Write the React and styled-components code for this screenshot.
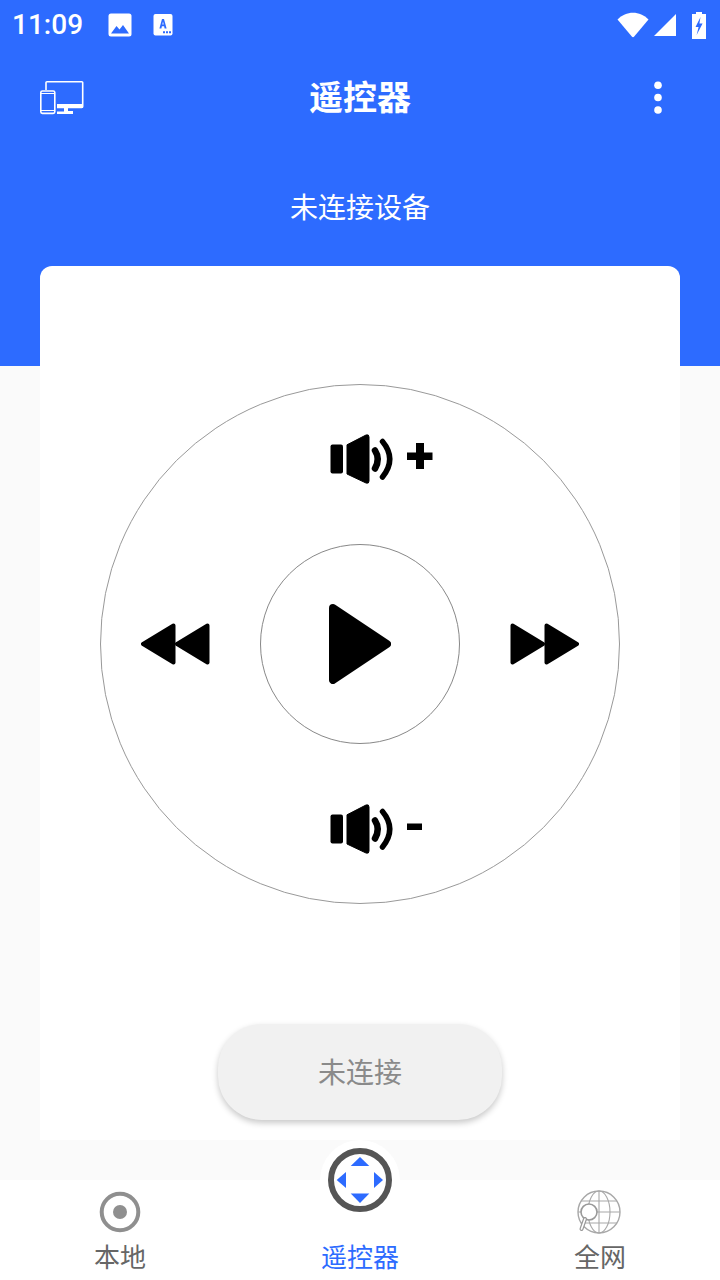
import React from "react";
import styled, { createGlobalStyle } from "styled-components";

const BLUE = "#2d6bff";

const GlobalStyle = createGlobalStyle`
  html, body {
    margin: 0;
    padding: 0;
    background: #fafafa;
  }
  * {
    box-sizing: border-box;
  }
`;

const Screen = styled.div`
  width: 720px;
  height: 1280px;
  overflow: hidden;
  display: flex;
  flex-direction: column;
  background: #fafafa;
  font-family: "Noto Sans CJK SC", "Noto Sans", sans-serif;
`;

const Hero = styled.header`
  height: 366px;
  flex: none;
  background: ${BLUE};
  color: #fff;
`;

const StatusBar = styled.div`
  height: 50px;
  display: flex;
  align-items: center;
  justify-content: space-between;
  padding: 0 14px 0 12px;
`;

const StatusGroup = styled.div`
  display: flex;
  align-items: center;
`;

const Clock = styled.span`
  font-family: Roboto, sans-serif;
  font-size: 28px;
  font-weight: 500;
  line-height: 50px;
  width: 96px;
`;

const StatusIcon = styled.svg`
  display: block;
  flex: none;
  margin-left: ${(p) => p.$gap || 0}px;
`;

const Toolbar = styled.div`
  height: 96px;
  display: flex;
  align-items: center;
  padding: 0 40px;
`;

const ToolbarIcon = styled.svg`
  display: block;
  width: 44px;
  height: 36px;
  flex: none;
`;

const Title = styled.h1`
  flex: 1;
  margin: 0;
  padding-bottom: 5px;
  text-align: center;
  font-size: 34px;
  line-height: 46px;
  font-weight: 700;
`;

const Subtitle = styled.p`
  margin: 40px 0 0;
  text-align: center;
  font-size: 28px;
  line-height: 40px;
`;

const Card = styled.main`
  width: 640px;
  height: 874px;
  flex: none;
  margin: -100px auto 0;
  padding-top: 118px;
  background: #fff;
  border-radius: 12px 12px 0 0;
  display: flex;
  flex-direction: column;
  align-items: center;
`;

const Wheel = styled.div`
  width: 520px;
  height: 520px;
  flex: none;
  border: 1px solid #999;
  border-radius: 50%;
  display: grid;
  grid-template-columns: 159px 200px 159px;
  grid-template-rows: 159px 200px 159px;
`;

const WheelCell = styled.button`
  grid-column: ${(p) => p.$col};
  grid-row: ${(p) => p.$row};
  display: flex;
  align-items: ${(p) => p.$align || "center"};
  justify-content: ${(p) => p.$justify || "flex-start"};
  padding: ${(p) => p.$pad || 0};
  margin: 0;
  border: 0;
  background: none;
`;

const CenterCell = styled(WheelCell)`
  width: 200px;
  height: 200px;
  border: 1px solid #888;
  border-radius: 50%;
`;

const ConnectButton = styled.button`
  width: 284px;
  height: 96px;
  flex: none;
  margin-top: 120px;
  padding: 0 0 2px;
  border: 0;
  border-radius: 44px;
  background: #f1f1f1;
  box-shadow: 0 3px 6px rgba(0, 0, 0, 0.22);
  color: #8a8a8a;
  font-family: inherit;
  font-size: 28px;
  line-height: 40px;
`;

const TabBar = styled.nav`
  height: 100px;
  flex: none;
  margin-top: 40px;
  background: #fff;
  display: grid;
  grid-template-columns: repeat(3, 240px);
`;

const Tab = styled.div`
  display: flex;
  flex-direction: column;
  align-items: center;
  color: ${(p) => (p.$active ? BLUE : "#666")};
`;

const TabIcon = styled.svg`
  display: block;
  width: 48px;
  height: 48px;
  margin-top: 8px;
  flex: none;
`;

const TabBubble = styled.div`
  width: 80px;
  height: 80px;
  margin-top: -40px;
  flex: none;
  border-radius: 50%;
  background: #fff;
  display: flex;
  align-items: center;
  justify-content: center;
`;

const TabLabel = styled.span`
  font-size: 26px;
  line-height: 36px;
  margin-top: ${(p) => p.$gap || 0}px;
`;

// the remote's icons are scaled bitmaps in the app, so they are a bit soft
const Svg = styled.svg`
  display: block;
  flex: none;
  filter: blur(0.5px);
`;

const PictureIcon = () => (
  <StatusIcon width="24" height="24" viewBox="0 0 24 24">
    <rect x="0.5" y="0.5" width="23" height="23" rx="2.5" fill="#fff" />
    <path d="M3 20.5 L8.5 13 L11.5 16.5 L15 12 L21 20.5 Z" fill={BLUE} />
  </StatusIcon>
);

const FontIcon = () => (
  <StatusIcon $gap={21} width="20" height="24" viewBox="0 0 20 24">
    <rect x="0.5" y="1" width="19" height="21.5" rx="2" fill="#fff" />
    <path
      d="M6.4 15.5 L9 6 H11 L13.6 15.5 H11.6 L11.1 13.3 H8.9 L8.4 15.5 Z M9.3 11.4 H10.7 L10 8.6 Z"
      fill={BLUE}
      fillRule="evenodd"
    />
    <path d="M10 18.2h2v2h-2zM13 18.2h2v2h-2zM16 18.2h2v2h-2z" fill={BLUE} />
  </StatusIcon>
);

const WifiIcon = () => (
  <StatusIcon width="32" height="26" viewBox="0 0 32 26">
    <path
      d="M0.5 7.5 C9 -1.5 23 -1.5 31.5 7.5 L17.2 24.6 C16.5 25.4 15.5 25.4 14.8 24.6 Z"
      fill="#fff"
    />
  </StatusIcon>
);

const SignalIcon = () => (
  <StatusIcon $gap={5} width="22" height="22" viewBox="0 0 22 22">
    <path d="M22 0 V22 H0 Z" fill="#fff" />
  </StatusIcon>
);

const BatteryIcon = () => (
  <StatusIcon $gap={16} width="14" height="27" viewBox="0 0 14 27">
    <path d="M4 0 H10 V2 H14 V27 H0 V2 H4 Z" fill="#fff" />
    <path d="M8.5 5 L3.5 15 H6.6 L4.6 23 L10.6 11.5 H7.4 Z" fill={BLUE} />
  </StatusIcon>
);

const DevicesIcon = () => (
  <ToolbarIcon viewBox="0 0 44 36">
    <g fill="none" stroke="#fff" strokeWidth="1.6">
      <path d="M6 10 V2.500 Q6 1.700 7 1.700 H41.800 Q42.700 1.700 42.700 2.500 V26.500 Q42.700 27.400 41.800 27.400 H17" />
      <rect x="0.800" y="11" width="14" height="22.400" rx="1.600" />
    </g>
    <path d="M17 24 H43 V28 H17 Z" fill="#fff" />
    <path d="M24 28 H28 V31 H33 V34 H17 V31.600 H24 Z" fill="#fff" />
    <path d="M1 13.500 H14.500 M1 30.500 H14.500" stroke="#fff" strokeWidth="1" />
  </ToolbarIcon>
);

const KebabIcon = () => (
  <ToolbarIcon viewBox="0 0 44 36">
    <circle cx="22" cy="5.300" r="3.800" fill="#fff" />
    <circle cx="22" cy="17.500" r="3.800" fill="#fff" />
    <circle cx="22" cy="30" r="3.800" fill="#fff" />
  </ToolbarIcon>
);

// speaker with the plus or minus mark next to it
const VolumeIcon = ({ plus }) => (
  <Svg width="104" height="52" viewBox="0 0 104 52">
    <rect x="0.500" y="10.500" width="12.500" height="29" rx="2" />
    <path
      d="M17 10.800 L36 1 Q39 0 39 3 V47 Q39 50 36 49 L17 40 Z"
      stroke="#000"
      strokeWidth="1"
      strokeLinejoin="round"
    />
    <path
      d="M45 16.500 Q50.500 25 45 34.500"
      fill="none"
      stroke="#000"
      strokeWidth="6.500"
      strokeLinecap="round"
    />
    <path
      d="M52.500 7.500 Q67 25 52.500 43"
      fill="none"
      stroke="#000"
      strokeWidth="5.500"
      strokeLinecap="round"
    />
    {plus ? (
      <path d="M77 18.500 H86 V9 H94 V18.500 H102.500 V26 H94 V35 H86 V26 H77 Z" />
    ) : (
      <rect x="77" y="19.500" width="15" height="6.500" />
    )}
  </Svg>
);

const SeekIcon = ({ back }) => (
  <Svg width="70" height="42" viewBox="0 0 70 42">
    <g
      transform={back ? "translate(70 0) scale(-1 1)" : undefined}
      stroke="#000"
      strokeWidth="4"
      strokeLinejoin="round"
    >
      <path d="M2.500 2.500 L33 21 L2.500 39.500 Z" />
      <path d="M36.500 2.500 L67 21 L36.500 39.500 Z" />
    </g>
  </Svg>
);

const PlayIcon = () => (
  <Svg width="64" height="82" viewBox="0 0 64 82">
    <path
      d="M5 5 L59 41 L5 77 Z"
      stroke="#000"
      strokeWidth="8"
      strokeLinejoin="round"
    />
  </Svg>
);

const LocalIcon = () => (
  <TabIcon viewBox="0 0 48 48">
    <circle cx="24" cy="24" r="18.300" fill="none" stroke="#8f8f8f" strokeWidth="4" />
    <circle cx="24" cy="24" r="7" fill="#8f8f8f" />
  </TabIcon>
);

const RemoteIcon = () => (
  <Svg width="66" height="66" viewBox="0 0 66 66">
    <circle cx="33" cy="33" r="29" fill="#fff" stroke="#555" strokeWidth="6" />
    <g fill={BLUE}>
      <path d="M33 10 L42.300 19 H23.700 Z" />
      <path d="M33 56 L42.300 46.500 H23.700 Z" />
      <path d="M9.700 33 L19 25 V41 Z" />
      <path d="M56 33 L47 25 V41 Z" />
    </g>
  </Svg>
);

const GlobeIcon = () => (
  <TabIcon viewBox="0 0 48 48">
    <g transform="translate(-2 0)">
      <g fill="none" stroke="#a8a8a8" strokeWidth="1.100">
        <circle cx="25" cy="24" r="21" strokeWidth="1.400" />
        <ellipse cx="25" cy="24" rx="11" ry="21" />
        <path d="M25 3 V45 M4 24 H46 M7 13 H43 M7 35 H43" />
      </g>
      <circle cx="15" cy="24" r="8" fill="#fff" stroke="#999" strokeWidth="1.600" />
      <path d="M11 31 L7.500 41" stroke="#999" strokeWidth="4" strokeLinecap="round" />
      <path d="M11 31 L7.500 41" stroke="#fff" strokeWidth="1.600" strokeLinecap="round" />
    </g>
  </TabIcon>
);

const App = () => {
  return (
    <Screen>
      <GlobalStyle />
      <Hero>
        <StatusBar>
          <StatusGroup>
            <Clock>11:09</Clock>
            <PictureIcon />
            <FontIcon />
          </StatusGroup>
          <StatusGroup>
            <WifiIcon />
            <SignalIcon />
            <BatteryIcon />
          </StatusGroup>
        </StatusBar>
        <Toolbar>
          <DevicesIcon />
          <Title>遥控器</Title>
          <KebabIcon />
        </Toolbar>
        <Subtitle>未连接设备</Subtitle>
      </Hero>
      <Card>
        <Wheel>
          <WheelCell $col={2} $row={1} $align="flex-start" $pad="49px 0 0 70px">
            <VolumeIcon plus />
          </WheelCell>
          <WheelCell $col={1} $row={2} $pad="0 0 0 39px">
            <SeekIcon back />
          </WheelCell>
          <CenterCell $col={2} $row={2} $justify="center">
            <PlayIcon />
          </CenterCell>
          <WheelCell $col={3} $row={2} $pad="0 0 0 50px">
            <SeekIcon />
          </WheelCell>
          <WheelCell $col={2} $row={3} $align="flex-start" $pad="60px 0 0 70px">
            <VolumeIcon />
          </WheelCell>
        </Wheel>
        <ConnectButton>未连接</ConnectButton>
      </Card>
      <TabBar>
        <Tab>
          <LocalIcon />
          <TabLabel $gap={2}>本地</TabLabel>
        </Tab>
        <Tab $active>
          <TabBubble>
            <RemoteIcon />
          </TabBubble>
          <TabLabel $gap={18}>遥控器</TabLabel>
        </Tab>
        <Tab>
          <GlobeIcon />
          <TabLabel $gap={2}>全网</TabLabel>
        </Tab>
      </TabBar>
    </Screen>
  );
};

export default App;
